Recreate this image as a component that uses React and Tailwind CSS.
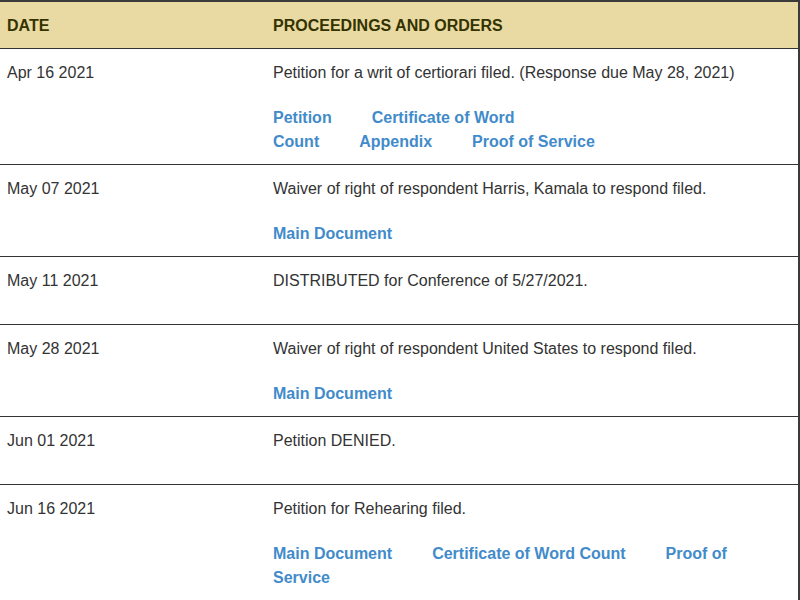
const rows = [
  {
    date: "Apr 16 2021",
    text: "Petition for a writ of certiorari filed. (Response due May 28, 2021)",
    links: [["Petition"], ["Certificate of Word", "Count"], ["Appendix"], ["Proof of Service"]],
  },
  {
    date: "May 07 2021",
    text: "Waiver of right of respondent Harris, Kamala to respond filed.",
    links: [["Main Document"]],
  },
  {
    date: "May 11 2021",
    text: "DISTRIBUTED for Conference of 5/27/2021.",
    links: [],
  },
  {
    date: "May 28 2021",
    text: "Waiver of right of respondent United States to respond filed.",
    links: [["Main Document"]],
  },
  {
    date: "Jun 01 2021",
    text: "Petition DENIED.",
    links: [],
  },
  {
    date: "Jun 16 2021",
    text: "Petition for Rehearing filed.",
    links: [["Main Document"], ["Certificate of Word Count"], ["Proof of", "Service"]],
  },
];

const App = () => {
  return (
    <div
      className="w-[800px] h-[600px] overflow-hidden bg-white text-[16px] leading-[24px] text-[#333]"
      style={{ fontFamily: '"Liberation Sans", Arial, sans-serif' }}
    >
      <div className="border-t-2 border-r-2 border-b border-[#3a3a3a]">
        {/* Header */}
        <div className="flex bg-[#e9d9a3] font-bold text-[#333300] pt-[12px] pb-[10px]">
          <div className="w-[266px] pl-[7px]">DATE</div>
          <div className="flex-1 pl-[7px]">PROCEEDINGS AND ORDERS</div>
        </div>

        {/* Rows */}
        {rows.map((row, i) => (
          <div key={i} className="flex border-t border-[#333] pt-[12px] pb-[10px]">
            <div className="w-[266px] pl-[7px]">{row.date}</div>
            <div className="flex-1 pl-[7px] pr-[7px]">
              <p className="mb-[21px]">{row.text}</p>
              {row.links.length > 0 && (
                <div>
                  {row.links.map((link, j) => (
                    <a
                      key={j}
                      href="#"
                      className="mr-10 font-bold text-[#428bca] no-underline"
                    >
                      {link[0]}
                      {link[1] && (
                        <>
                          <br />
                          {link[1]}
                        </>
                      )}
                    </a>
                  ))}
                </div>
              )}
            </div>
          </div>
        ))}
      </div>
    </div>
  );
};

export default App;
